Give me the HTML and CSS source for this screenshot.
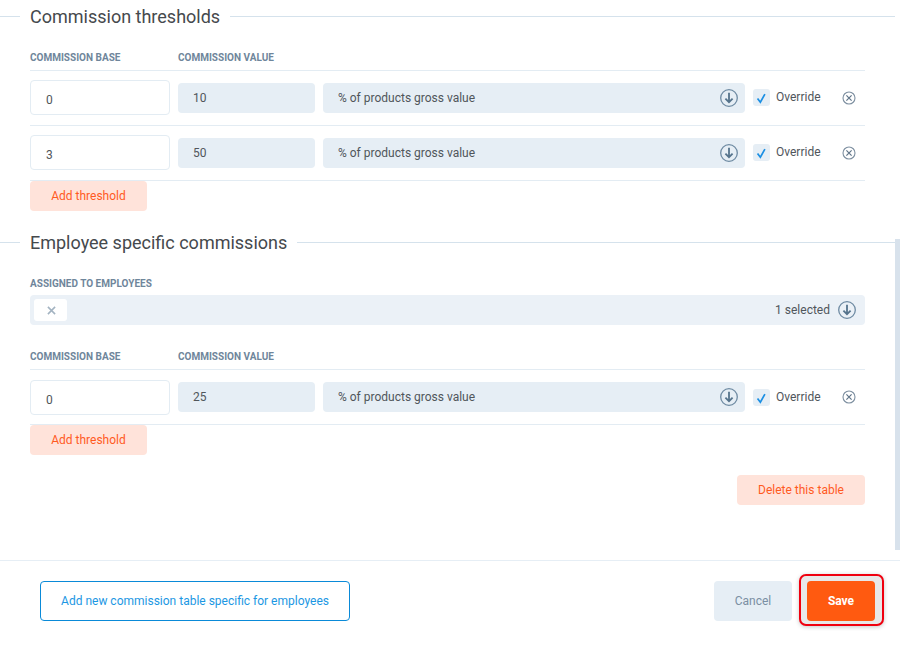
FILE: index.html
```html
<!DOCTYPE html>
<html lang="en">
<head>
<meta charset="utf-8">
<title>Commission thresholds</title>
<link rel="stylesheet" href="styles.css">
</head>
<body>
<svg class="defs" width="0" height="0" aria-hidden="true">
  <symbol id="i-down" viewBox="0 0 18 18">
    <circle cx="9" cy="9" r="8.3" fill="none" stroke="#6f8ba3" stroke-width="1.3"/>
    <path d="M9 3.8V13M5.4 9.6 9 13.2l3.6-3.6" fill="none" stroke="#55738c" stroke-width="1.8"/>
  </symbol>
  <symbol id="i-check" viewBox="0 0 18 18">
    <path d="M4.8 10 7.8 14 12.6 5.4" fill="none" stroke="#1b8fe3" stroke-width="1.8"/>
  </symbol>
  <symbol id="i-close" viewBox="0 0 14 14">
    <circle cx="7" cy="7" r="6" fill="none" stroke="#7d8fa0" stroke-width="1.1"/>
    <path d="M4.4 4.4 9.6 9.6M9.6 4.4 4.4 9.6" fill="none" stroke="#5f7488" stroke-width="1.2"/>
  </symbol>
  <symbol id="i-x" viewBox="0 0 10 10">
    <path d="M1 1 9 9M9 1 1 9" fill="none" stroke="#a3b3c1" stroke-width="1.7"/>
  </symbol>
</svg>
<div class="page">
  <main class="content">
    <section class="section">
      <h2 class="heading"><span class="heading-text">Commission thresholds</span></h2>
      <div class="table">
        <div class="head head-first">
          <span class="label col-base">Commission base</span>
          <span class="label">Commission value</span>
        </div>
        <div class="row">
          <div class="input">0</div>
          <div class="field field-value">10</div>
          <div class="field field-type">% of products gross value<svg class="icon-down"><use href="#i-down"/></svg></div>
          <div class="override"><span class="checkbox"><svg class="icon-check"><use href="#i-check"/></svg></span><span class="override-text">Override</span></div>
          <svg class="icon-close"><use href="#i-close"/></svg>
        </div>
        <div class="row">
          <div class="input">3</div>
          <div class="field field-value">50</div>
          <div class="field field-type">% of products gross value<svg class="icon-down"><use href="#i-down"/></svg></div>
          <div class="override"><span class="checkbox"><svg class="icon-check"><use href="#i-check"/></svg></span><span class="override-text">Override</span></div>
          <svg class="icon-close"><use href="#i-close"/></svg>
        </div>
        <button class="btn btn-soft btn-add">Add threshold</button>
      </div>
    </section>
    <section class="section section-second">
      <h2 class="heading"><span class="heading-text">Employee specific commissions</span></h2>
      <div class="table">
        <div class="label label-assigned">Assigned to employees</div>
        <div class="multi">
          <span class="chip"><svg class="icon-x"><use href="#i-x"/></svg></span>
          <span class="multi-count">1 selected</span>
          <svg class="icon-down"><use href="#i-down"/></svg>
        </div>
        <div class="head head-second">
          <span class="label col-base">Commission base</span>
          <span class="label">Commission value</span>
        </div>
        <div class="row row-alt">
          <div class="input">0</div>
          <div class="field field-value">25</div>
          <div class="field field-type">% of products gross value<svg class="icon-down"><use href="#i-down"/></svg></div>
          <div class="override"><span class="checkbox"><svg class="icon-check"><use href="#i-check"/></svg></span><span class="override-text">Override</span></div>
          <svg class="icon-close"><use href="#i-close"/></svg>
        </div>
        <button class="btn btn-soft btn-add">Add threshold</button>
        <div class="table-actions">
          <button class="btn btn-soft btn-delete">Delete this table</button>
        </div>
      </div>
    </section>
    <div class="scrollbar"></div>
  </main>
  <footer class="footer">
    <button class="btn btn-outline">Add new commission table specific for employees</button>
    <div class="footer-actions">
      <button class="btn btn-cancel">Cancel</button>
      <div class="highlight"><button class="btn btn-save">Save</button></div>
    </div>
  </footer>
</div>
</body>
</html>
```

FILE: styles.css
```css
* { box-sizing: border-box; }
html, body { margin: 0; height: 100%; }
body {
  background: #fff;
  font-family: Roboto, "Liberation Sans", sans-serif;
  font-size: 12px;
  color: #50565b;
  overflow: hidden;
}
.defs { position: absolute; }
.page { width: 900px; height: 646px; display: flex; flex-direction: column; }
.content { position: relative; height: 560px; overflow: hidden; }
.section { width: 895px; }
.section-second { margin-top: 15px; }

.heading {
  display: flex;
  align-items: center;
  height: 32px;
  margin: 0;
  font-size: 18px;
  font-weight: 400;
  color: #45494d;
}
.heading::before, .heading::after {
  content: "";
  height: 1px;
  background: #d5e2ec;
}
.heading::before { width: 20px; }
.heading::after { flex: 1; }
.heading-text { padding: 0 10px; white-space: nowrap; }

.table { margin-left: 30px; width: 835px; }
.label {
  font-size: 10px;
  line-height: 13px;
  font-weight: 700;
  text-transform: uppercase;
  color: #6f869b;
}
.head {
  display: flex;
  height: 20px;
  border-bottom: 1px solid #e3ecf3;
}
.head-first { margin-top: 19px; }
.head-second { margin-top: 25px; }
.col-base { width: 148px; }
.label-assigned { margin-top: 19px; height: 18px; }

.row {
  display: flex;
  align-items: flex-start;
  height: 55px;
  padding-top: 9px;
  border-bottom: 1px solid #e3ecf3;
}
.row-alt { padding-top: 10px; }
.row-alt .field { margin-top: 2px; }
.row-alt .icon-close { margin-top: 10px; }

.input {
  width: 140px;
  height: 35px;
  margin-right: 8px;
  padding: 12px 0 0 15px;
  line-height: 14px;
  background: #fff;
  border: 1px solid #e3ecf3;
  border-radius: 4px;
}
.field {
  display: flex;
  align-items: center;
  height: 30px;
  margin-top: 3px;
  padding-left: 15px;
  padding-bottom: 1px;
  background: #e6eef5;
  border-radius: 4px;
}
.field-value { width: 137px; margin-right: 8px; }
.field-type { width: 422px; justify-content: space-between; padding-right: 7px; margin-right: 8px; }
.icon-down { width: 18px; height: 18px; flex: none; }
.field-type .icon-down { margin-top: 1px; }

.override { display: flex; margin-top: 9px; }
.checkbox {
  display: flex;
  align-items: center;
  justify-content: center;
  width: 17px;
  height: 17px;
  background: #e6eef5;
  border-radius: 3px;
}
.icon-check { width: 17px; height: 17px; }
.override-text { margin-left: 6px; line-height: 16px; }
.icon-close { width: 14px; height: 14px; margin: 11px 0 0 21px; }

.btn {
  font-family: inherit;
  font-size: 12px;
  border: 0;
  border-radius: 4px;
  padding: 0;
  cursor: pointer;
}
.btn-soft { height: 30px; background: #ffe3da; color: #ff5a1f; }
.btn-add { display: block; width: 117px; }
.table-actions { display: flex; justify-content: flex-end; margin-top: 20px; }
.btn-delete { width: 128px; }

.multi {
  display: flex;
  align-items: center;
  height: 30px;
  padding: 0 9px 0 4px;
  background: #ebf1f7;
  border-radius: 4px;
}
.chip {
  display: flex;
  align-items: center;
  justify-content: center;
  width: 33px;
  height: 22px;
  padding-left: 2px;
  background: #fff;
  border-radius: 3px;
}
.icon-x { width: 9px; height: 9px; }
.multi-count { margin-left: auto; margin-right: 8px; }

.scrollbar {
  position: absolute;
  right: 0;
  top: 239px;
  width: 5px;
  height: 311px;
  background: #d8e2ec;
}

.footer {
  display: flex;
  justify-content: space-between;
  height: 86px;
  padding: 13px 16px 0 40px;
  border-top: 1px solid #e6eef5;
}
.btn-outline {
  width: 310px;
  height: 40px;
  margin-top: 7px;
  background: #fff;
  color: #1c97e3;
  border: 1px solid #0a8ad8;
}
.footer-actions { display: flex; align-items: flex-start; }
.btn-cancel {
  width: 78px;
  height: 40px;
  margin: 7px 7px 0 0;
  background: #e6eef5;
  color: #7b8fa3;
}
.highlight {
  width: 85px;
  height: 52px;
  padding: 5px 7px 3px 6px;
  background: #e8e8e8;
  border: 2px solid #f0000f;
  border-radius: 7px;
  box-shadow: 0 1px 4px rgba(0,0,0,.22);
}
.btn-save {
  display: block;
  width: 68px;
  height: 40px;
  background: #ff5a10;
  color: #fff;
  font-weight: 700;
}
```
